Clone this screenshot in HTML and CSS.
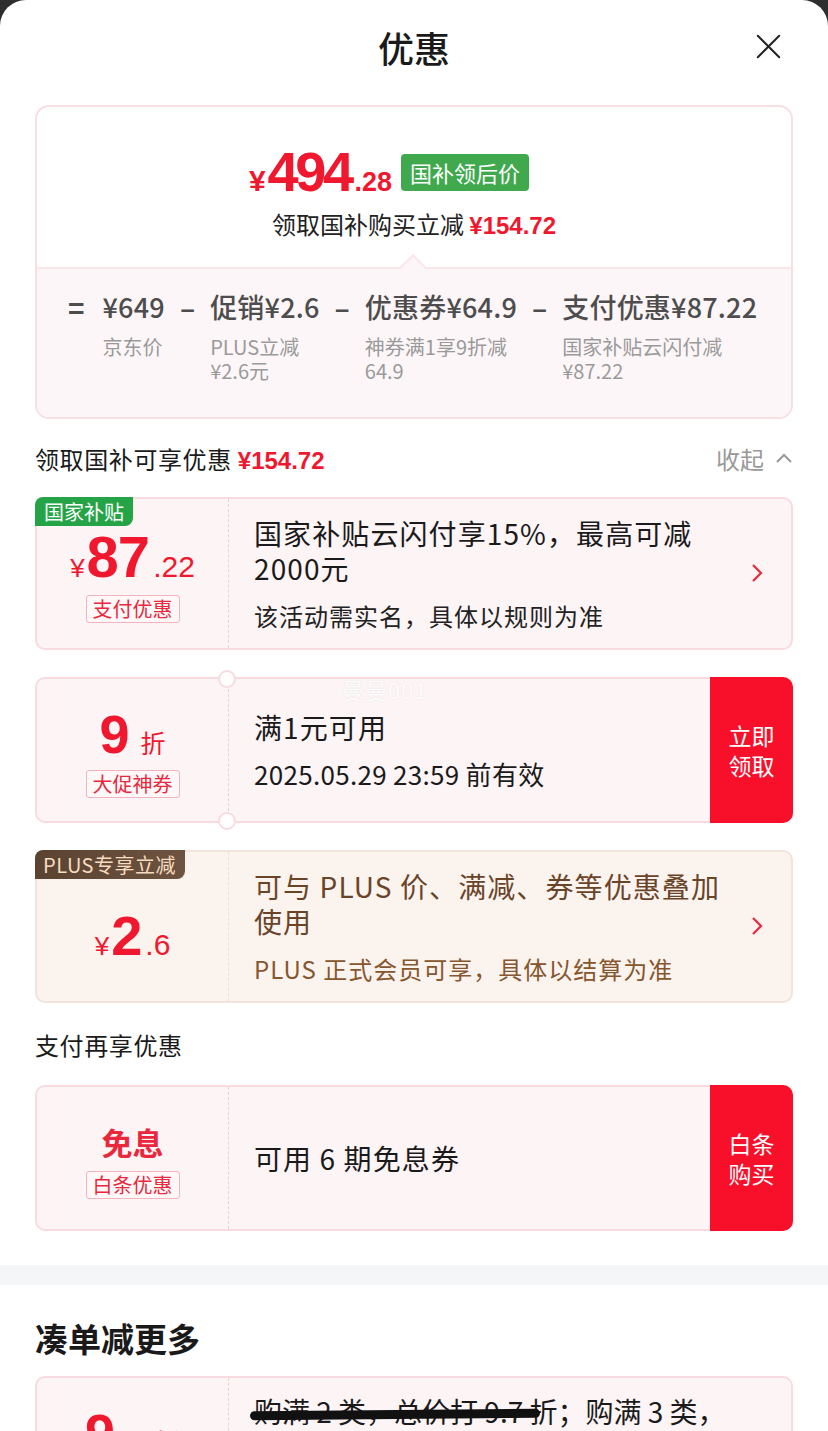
FILE: index.html
```html
<!DOCTYPE html>
<html lang="zh-CN">
<head>
<meta charset="utf-8">
<title>优惠</title>
<link rel="stylesheet" href="styles.css">
</head>
<body>
<div class="sheet">
  <header class="head">
    <h1 class="title">优惠</h1>
    <svg class="close" viewBox="0 0 28 28" width="28" height="28"><path d="M2 2L26 26M26 2L2 26" stroke="#222" stroke-width="2.2" fill="none" stroke-linecap="round"/></svg>
  </header>

  <div class="content">
    <section class="summary">
      <div class="sum-top">
        <div class="price-row">
          <span class="price"><span class="yen">¥</span><span class="int">494</span><span class="dec">.28</span></span>
          <span class="green-badge">国补领后价</span>
        </div>
        <div class="sum-sub">领取国补购买立减 <span class="red num">¥154.72</span></div>
      </div>
      <div class="sum-bottom">
        <div class="eq">
          <span class="op">=</span>
          <div class="col"><div class="val">¥649</div><div class="lab">京东价</div></div>
          <span class="op">–</span>
          <div class="col"><div class="val">促销¥2.6</div><div class="lab">PLUS立减<br>¥2.6元</div></div>
          <span class="op">–</span>
          <div class="col"><div class="val">优惠券¥64.9</div><div class="lab">神券满1享9折减<br>64.9</div></div>
          <span class="op">–</span>
          <div class="col"><div class="val">支付优惠¥87.22</div><div class="lab">国家补贴云闪付减<br>¥87.22</div></div>
        </div>
      </div>
    </section>

    <div class="sec-row">
      <div class="sec-title">领取国补可享优惠 <span class="red num">¥154.72</span></div>
      <div class="collapse">收起 <svg viewBox="0 0 18 12" width="18" height="12"><path d="M2 10L9 3L16 10" stroke="#999" stroke-width="2" fill="none"/></svg></div>
    </div>

    <div class="card pink">
      <div class="card-left">
        <span class="corner-tag green">国家补贴</span>
        <div class="amount"><span class="a-yen">¥</span><span class="a-int">87</span><span class="a-dec">.22</span></div>
        <span class="ltag">支付优惠</span>
      </div>
      <div class="card-body">
        <div class="c-main">国家补贴云闪付享15%，最高可减<br>2000元</div>
        <div class="c-sub">该活动需实名，具体以规则为准</div>
      </div>
      <svg class="chev" viewBox="0 0 12 20" width="12" height="20"><path d="M2 2L10 10L2 18" stroke="#e8283d" stroke-width="2.2" fill="none"/></svg>
    </div>

    <div class="card pink short">
      <div class="card-left notched">
        <div class="amount"><span class="a-int nine">9</span><span class="a-unit">折</span></div>
        <span class="ltag">大促神券</span>
      </div>
      <div class="card-body">
        <div class="c-main">满1元可用</div>
        <div class="c-date">2025.05.29 23:59 前有效</div>
      </div>
      <div class="btn">立即<br>领取</div>
      <span class="watermark">曼曼001</span>
    </div>

    <div class="card beige">
      <div class="card-left">
        <span class="corner-tag brown">PLUS专享立减</span>
        <div class="amount plus"><span class="a-yen">¥</span><span class="a-int">2</span><span class="a-dec">.6</span></div>
      </div>
      <div class="card-body">
        <div class="c-main">可与 PLUS 价、满减、券等优惠叠加<br>使用</div>
        <div class="c-sub">PLUS 正式会员可享，具体以结算为准</div>
      </div>
      <svg class="chev" viewBox="0 0 12 20" width="12" height="20"><path d="M2 2L10 10L2 18" stroke="#e8283d" stroke-width="2.2" fill="none"/></svg>
    </div>

    <div class="sec-row plain">
      <div class="sec-title">支付再享优惠</div>
    </div>

    <div class="card pink short">
      <div class="card-left">
        <div class="mianxi">免息</div>
        <span class="ltag">白条优惠</span>
      </div>
      <div class="card-body">
        <div class="c-main">可用 6 期免息券</div>
      </div>
      <div class="btn">白条<br>购买</div>
    </div>
  </div>

  <div class="band"></div>

  <div class="content">
    <h2 class="more">凑单减更多</h2>
    <div class="card pink last">
      <div class="card-left">
        <div class="amount"><span class="a-int nine">9</span><span class="a-dec">.7</span><span class="a-unit">折</span></div>
      </div>
      <div class="card-body top">
        <div class="c-main tight">购满 2 类，总价打 9.7 折；购满 3 类，</div>
        <span class="scribble"></span>
      </div>
    </div>
  </div>
</div>
</body>
</html>
```

FILE: styles.css
```css
* { box-sizing: border-box; }
html, body { margin: 0; padding: 0; }
body {
  background: #2e2e2e;
  height: 1431px;
  overflow: hidden;
  font-family: "Noto Sans CJK SC", "Noto Sans", sans-serif;
  color: #1a1a1a;
}
.sheet {
  background: #fff;
  border-radius: 26px 26px 0 0;
  height: 1431px;
  overflow: hidden;
}
.red { color: #f0182f; }
.num {
  font-family: "Liberation Sans", "Roboto", sans-serif;
  font-weight: 700;
  font-size: 24px;
}
.head {
  position: relative;
  height: 94px;
  display: flex;
  align-items: center;
  justify-content: center;
}
.title {
  margin: 0;
  font-size: 36px;
  font-weight: 500;
  color: #1a1a1a;
}
.close {
  position: absolute;
  right: 47px;
  top: 34px;
  width: 25px;
  height: 25px;
}
.content { padding: 0 35px; }

/* summary */
.summary {
  margin-top: 11px;
  border: 2px solid #f8dfe4;
  border-radius: 14px;
  overflow: hidden;
}
.sum-top {
  height: 160px;
  display: flex;
  flex-direction: column;
  align-items: center;
  padding-top: 37px;
}
.price-row {
  display: flex;
  align-items: center;
  gap: 9px;
  padding-right: 50px;
}
.price {
  color: #f0182f;
  font-family: "Liberation Sans", "Roboto", sans-serif;
  font-weight: 700;
  display: flex;
  align-items: baseline;
  line-height: 1;
}
.price .yen { font-size: 30px; margin-right: 2px; }
.price .int { font-size: 56px; letter-spacing: -3.5px; margin-right: 4px; }
.price .dec { font-size: 27px; }
.green-badge {
  background: #40a94e;
  color: #fff;
  font-size: 22px;
  line-height: 37px;
  height: 37px;
  padding: 0 9px;
  border-radius: 4px;
}
.sum-sub {
  margin-top: 6px;
  font-size: 24px;
  color: #222;
}
.sum-bottom {
  position: relative;
  background: #fdf6f8;
  border-top: 2px solid #fbe6ea;
  height: 150px;
  padding: 20px 0 0 31px;
}
.sum-bottom::before {
  content: "";
  position: absolute;
  left: 366px;
  top: -11px;
  width: 18px;
  height: 18px;
  background: #fdf6f8;
  border-left: 2px solid #fbe6ea;
  border-top: 2px solid #fbe6ea;
  transform: rotate(45deg);
}
.eq {
  display: flex;
  align-items: flex-start;
  gap: 15px;
}
.op {
  font-size: 28px;
  line-height: 36px;
  font-weight: 700;
  color: #4d4d4d;
}
.op:first-child { margin-right: 3px; }
.col .val {
  font-size: 27px;
  line-height: 36px;
  font-weight: 500;
  color: #4d4d4d;
  white-space: nowrap;
  letter-spacing: 0.2px;
}
.col .lab {
  margin-top: 10px;
  font-size: 20px;
  line-height: 24px;
  color: #9a9a9a;
  white-space: nowrap;
}

/* section row */
.sec-row {
  display: flex;
  align-items: center;
  justify-content: space-between;
  height: 78px;
}
.sec-row.plain {
  height: 55px;
  align-items: flex-start;
}
.sec-row.plain .sec-title { line-height: 30px; }
.sec-title {
  font-size: 24px;
  letter-spacing: 0.6px;
  color: #1a1a1a;
}
.sec-title .num { letter-spacing: 0; }
.collapse {
  display: flex;
  align-items: center;
  gap: 11px;
  font-size: 24px;
  color: #999;
}

/* cards */
.card {
  position: relative;
  display: flex;
  align-items: stretch;
  height: 153px;
  border: 2px solid #f8dbe1;
  border-radius: 10px;
  margin-bottom: 27px;
}
.card.short { height: 146px; }
.card.pink { background: #fdf4f6; }
.card.beige { background: #fbf3ee; border-color: #f2e4da; }
.card-left {
  position: relative;
  width: 192px;
  flex: none;
  border-right: 1px dashed #f1cfd6;
  display: flex;
  flex-direction: column;
  align-items: center;
  justify-content: center;
  padding-top: 4px;
}
.beige .card-left { border-right-color: #eedfd5; }
.notched::before, .notched::after {
  content: "";
  position: absolute;
  right: -8px;
  width: 14px;
  height: 14px;
  border-radius: 50%;
  background: #fff;
  border: 2px solid #f8dbe1;
}
.notched::before { top: -9px; }
.notched::after { bottom: -9px; }
.corner-tag {
  position: absolute;
  left: -2px;
  top: -2px;
  font-size: 20px;
  line-height: 29px;
  height: 29px;
  padding: 0 8px;
  border-radius: 8px 0 8px 0;
  white-space: nowrap;
}
.corner-tag.green { background: #25a447; color: #fff; padding: 0 9px; }
.corner-tag.brown {
  background: linear-gradient(90deg, #5b4331, #6d5340);
  color: #f6dcc0;
  font-size: 20px;
  padding: 0 9px 0 8px;
  letter-spacing: 0.5px;
}
.amount {
  color: #f0182f;
  display: flex;
  align-items: baseline;
  line-height: 1;
  font-family: "Liberation Sans", "Roboto", sans-serif;
}
.a-yen { font-size: 26px; margin-right: 2px; }
.a-int { font-size: 58px; font-weight: 700; letter-spacing: -1px; }
.a-dec { font-size: 30px; margin-left: 4px; }
.amount.plus { margin-top: 14px; }
.amount.plus .a-int { font-size: 56px; }
.a-int.nine { font-size: 54px; }
.a-unit {
  font-family: "Noto Sans CJK SC", sans-serif;
  font-size: 25px;
  margin-left: 12px;
}
.ltag {
  margin-top: 9px;
  border: 1px solid #f2b3be;
  border-radius: 3px;
  color: #e8283d;
  font-size: 20px;
  line-height: 26px;
  padding: 0 6px;
  background: rgba(255,255,255,0.35);
}
.mianxi {
  color: #e8283d;
  font-size: 31px;
  font-weight: 700;
  line-height: 40px;
}
.card-body {
  flex: 1;
  padding: 0 0 0 25px;
  display: flex;
  flex-direction: column;
  justify-content: center;
}
.c-main {
  font-size: 28px;
  line-height: 35px;
  color: #1a1a1a;
  letter-spacing: 1.1px;
}
.c-main.tight { letter-spacing: 0; }
.c-sub {
  margin-top: 14px;
  font-size: 24px;
  line-height: 32px;
  color: #222;
  letter-spacing: 1px;
}
.c-date {
  margin-top: 13px;
  font-size: 26px;
  line-height: 32px;
  color: #1a1a1a;
  letter-spacing: 0.3px;
}
.beige .c-main { color: #6a4428; }
.beige .c-sub { color: #86562f; }
.chev {
  position: absolute;
  right: 28px;
  top: 64px;
}
.btn {
  width: 83px;
  flex: none;
  margin: -2px -2px -2px 0;
  background: #f8102a;
  color: #fff;
  border-radius: 0 10px 10px 0;
  font-size: 23px;
  line-height: 30px;
  display: flex;
  align-items: center;
  justify-content: center;
  text-align: center;
}
.watermark {
  position: absolute;
  left: 305px;
  top: -6px;
  font-size: 22px;
  color: rgba(255,255,255,0.9);
  text-shadow: 0 0 2px rgba(0,0,0,0.08);
  letter-spacing: 1px;
}
.band {
  height: 20px;
  background: #f5f6f8;
  margin-top: 34px;
}
.more {
  margin: 0;
  height: 91px;
  display: flex;
  align-items: center;
  font-size: 33px;
  font-weight: 700;
  color: #1a1a1a;
  padding-top: 14px;
}
.card.last { height: 200px; }
.card.last .card-left { justify-content: flex-start; padding-top: 28px; }
.card-body.top { justify-content: flex-start; padding-top: 16px; position: relative; }
.scribble {
  position: absolute;
  left: 21px;
  top: 32px;
  width: 290px;
  height: 9px;
  background: #111;
  border-radius: 5px;
  transform: rotate(-0.5deg);
}
```
